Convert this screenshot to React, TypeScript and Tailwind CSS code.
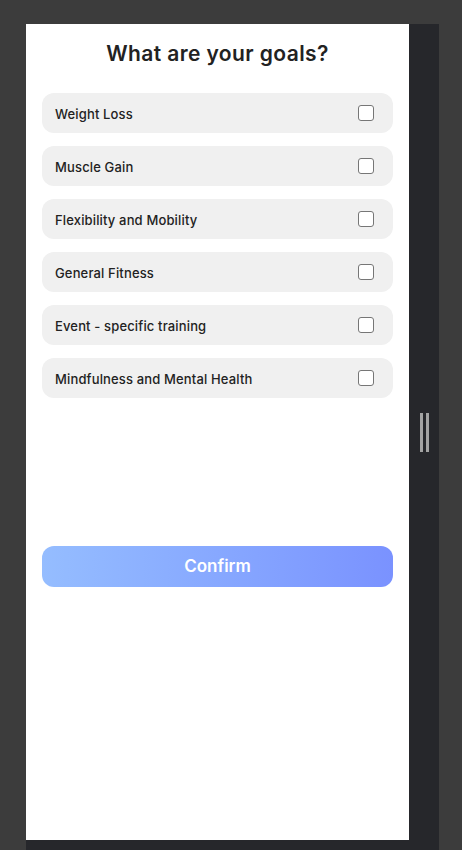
import { useState } from 'react';

const GOALS = [
  'Weight Loss',
  'Muscle Gain',
  'Flexibility and Mobility',
  'General Fitness',
  'Event - specific training',
  'Mindfulness and Mental Health',
];

function GoalRow({ label, checked, onToggle }: { label: string; checked: boolean; onToggle: () => void }) {
  return (
    <button
      onClick={onToggle}
      className="flex h-10 w-full items-center justify-between rounded-xl bg-[#f0f0f0] pl-[13px] pr-[19px] text-left"
    >
      <span className="pt-[3px] text-[13px] font-medium tracking-[0.15px] text-[#222222]">{label}</span>
      <span
        className={`h-4 w-4 rounded-[3px] border ${
          checked ? 'border-[#7b93ff] bg-[#7b93ff]' : 'border-[#767676] bg-white'
        }`}
      />
    </button>
  );
}

export default function App() {
  const [selected, setSelected] = useState<string[]>([]);

  const toggle = (goal: string) =>
    setSelected((prev) => (prev.includes(goal) ? prev.filter((g) => g !== goal) : [...prev, goal]));

  return (
    <div className="h-[850px] overflow-hidden bg-[#3c3c3c] pl-[26px] pt-6 font-['Inter',sans-serif]">
      <div className="flex h-[826px] w-[413px] items-start bg-[#26272b]">
        {/* Panel */}
        <div className="flex h-[816px] w-[383px] flex-col bg-white px-4">
          <h1 className="mt-[18px] text-center text-[21px] leading-6 font-semibold tracking-[0.4px] text-[#222222]">
            What are your goals?
          </h1>

          <div className="mt-[27px] flex flex-col gap-[13px]">
            {GOALS.map((goal) => (
              <GoalRow key={goal} label={goal} checked={selected.includes(goal)} onToggle={() => toggle(goal)} />
            ))}
          </div>

          <button className="mt-[148px] h-[41px] w-full rounded-xl bg-gradient-to-r from-[#95bdff] to-[#7a92ff] text-[17px] font-semibold text-white">
            Confirm
          </button>
        </div>

        {/* Resize gutter */}
        <div className="flex h-[816px] w-[30px] items-center justify-center gap-[3px]">
          <span className="h-[39px] w-[3px] bg-[#a3a3a3]" />
          <span className="h-[39px] w-[3px] bg-[#a3a3a3]" />
        </div>
      </div>
    </div>
  );
}
